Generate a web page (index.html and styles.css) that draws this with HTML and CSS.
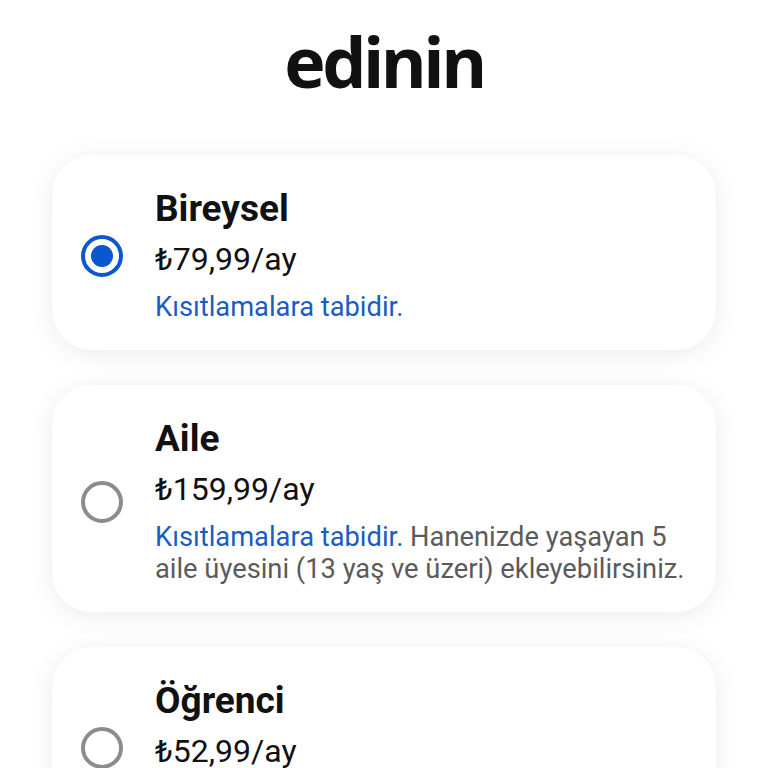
FILE: index.html
```html
<!DOCTYPE html>
<html>
<head>
    <title>Abonelik planı</title>
    <meta charset="utf-8" />
    <link rel="stylesheet" href="styles.css">
</head>
<body>
    <div class="container">
        <h1>edinin</h1>
        <div class="plans">
            <label class="plan">
                <span class="radio checked"></span>
                <span class="info">
                    <span class="name">Bireysel</span>
                    <span class="price">₺79,99/ay</span>
                    <span class="desc"><span class="link">Kısıtlamalara tabidir.</span></span>
                </span>
            </label>
            <label class="plan">
                <span class="radio"></span>
                <span class="info">
                    <span class="name">Aile</span>
                    <span class="price">₺159,99/ay</span>
                    <span class="desc"><span class="link">Kısıtlamalara tabidir.</span> Hanenizde yaşayan 5 aile üyesini (13 yaş ve üzeri) ekleyebilirsiniz.</span>
                </span>
            </label>
            <label class="plan">
                <span class="radio"></span>
                <span class="info">
                    <span class="name">Öğrenci</span>
                    <span class="price">₺52,99/ay</span>
                    <span class="desc"><span class="link">Kısıtlamalara tabidir.</span> Uygun öğrenciler için.</span>
                </span>
            </label>
        </div>
    </div>
</body>
</html>
```

FILE: styles.css
```css
body {
    font-family: 'Roboto', 'Liberation Sans', sans-serif;
    background-color: #fff;
    margin: 0;
    padding: 0;
    overflow: hidden;
}
.container {
    padding: 0 52px;
}
h1 {
    font-family: 'Open Sans', sans-serif;
    font-weight: 700;
    font-size: 70px;
    line-height: 70px;
    letter-spacing: -3.5px;
    color: #111;
    text-align: center;
    margin: 26px 0 59px;
}
.plans {
    display: flex;
    flex-direction: column;
    gap: 35px;
}
.plan {
    display: flex;
    align-items: center;
    gap: 32px;
    background-color: #fff;
    border-radius: 40px;
    padding: 34px 16px 27px 29px;
    box-shadow: 0 4px 26px rgba(0, 0, 0, 0.08);
}
.radio {
    flex: none;
    width: 42px;
    height: 42px;
    box-sizing: border-box;
    border: 4px solid #8c8c8c;
    border-radius: 50%;
    display: flex;
    align-items: center;
    justify-content: center;
}
.radio.checked {
    border-color: #0b57d0;
}
.radio.checked::after {
    content: "";
    width: 22px;
    height: 22px;
    border-radius: 50%;
    background-color: #0b57d0;
}
.info {
    display: flex;
    flex-direction: column;
}
.name {
    font-size: 37px;
    line-height: 40px;
    font-weight: 700;
    color: #111;
}
.price {
    font-size: 32px;
    line-height: 44px;
    color: #111;
    margin-top: 8px;
}
.desc {
    font-size: 27.3px;
    line-height: 32px;
    color: #5b5b5b;
    margin-top: 10px;
}
.link {
    color: #1a5cc4;
}
```
